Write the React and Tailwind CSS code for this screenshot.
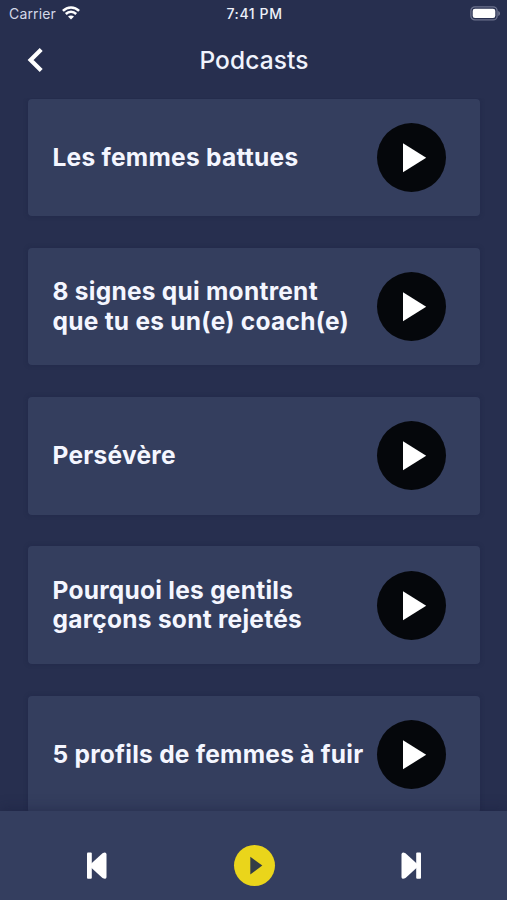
const podcasts = [
  { id: 1, title: 'Les femmes battues' },
  { id: 2, title: '8 signes qui montrent que tu es un(e) coach(e)' },
  { id: 3, title: 'Persévère' },
  { id: 4, title: 'Pourquoi les gentils garçons sont rejetés' },
  { id: 5, title: '5 profils de femmes à fuir' },
]

function StatusBar() {
  return (
    <div className="grid h-7 shrink-0 grid-cols-3 items-center pl-[9px] pr-[6px] text-[14px]">
      <div className="flex items-center gap-[6px] pb-px text-[#d3d8e8]">
        <span className="tracking-[0.15px]">Carrier</span>
        <svg className="mb-px h-[14px] w-[18px]" viewBox="0 0 18 14" fill="none" stroke="#fff" strokeWidth="2.5">
          <path d="M0.9 4.9C5.5 0.3 12.5 0.3 17.1 4.9" />
          <path d="M3.8 8C6.8 5.1 11.2 5.1 14.2 8" />
          <path d="M9 13.6L6 10.6C7.7 9 10.3 9 12 10.6Z" fill="#fff" stroke="none" />
        </svg>
      </div>
      <span className="pb-px pr-px text-center text-[14px] font-medium tracking-[0.6px] text-[#eef1fa]">7:41 PM</span>
      <svg className="mb-[2px] h-[15px] w-[31px] justify-self-end" viewBox="0 0 31 15">
        <rect x="0.9" y="0.9" width="26.2" height="13" rx="4" fill="none" stroke="#6d738e" strokeWidth="1.3" />
        <rect x="2.7" y="2.7" width="22.6" height="9.4" rx="2.3" fill="#fff" />
        <path d="M28.3 5v5c2.1-.8 2.1-4.2 0-5z" fill="#7d839b" />
      </svg>
    </div>
  )
}

function Header() {
  return (
    <header className="grid h-[70px] shrink-0 grid-cols-[1fr_auto_1fr] items-center px-[27px] pb-[7px]">
      <button aria-label="Retour" className="w-4">
        <svg className="h-[26px] w-4" viewBox="0 0 16 26" fill="none" stroke="#fff" strokeWidth="4.2">
          <path d="M14.2 2.4L3.6 13L14.2 23.4" />
        </svg>
      </button>
      <h1 className="pl-px pt-px text-[24.5px] font-medium tracking-[0.1px] text-[#f0f3fd]">Podcasts</h1>
    </header>
  )
}

function PodcastCard({ title }) {
  return (
    <li className="flex h-[117.5px] shrink-0 items-center rounded-[4px] bg-[#343e5e] pl-[25px] pr-[34px] shadow-[0_0_5px_rgba(20,26,58,0.25)]">
      <h2 className="w-[324px] shrink-0 pr-[11px] text-[24.5px] font-bold leading-[29.5px] tracking-[0.26px] text-[#f4f6ff]">
        {title}
      </h2>
      <button aria-label="Lire" className="size-[69px] shrink-0 rounded-full bg-[#05070b]">
        <svg className="size-full" viewBox="0 0 69 69" fill="#fff">
          <path d="M26 20.3V49.3L49.2 34.8Z" />
        </svg>
      </button>
    </li>
  )
}

function Player() {
  return (
    <footer className="z-10 flex h-[89px] shrink-0 items-center justify-between bg-[#343e5f] pl-[86px] pr-[85px] pt-[20px] shadow-[0_-2px_12px_rgba(22,28,60,0.4)]">
      <button aria-label="Précédent">
        <svg className="h-[27px] w-[21px]" viewBox="0 0 21 27" fill="#fff">
          <rect x="1" y="0.5" width="4.8" height="26.2" rx="1" />
          <path d="M5 11.7L16.5 1.2Q20 -0.7 20.5 2V25.2Q20 28 16.5 26L5 15.500Z" />
        </svg>
      </button>
      <button aria-label="Lecture" className="size-[41px] rounded-full bg-[#ead51b]">
        <svg className="size-full" viewBox="0 0 41 41" fill="#343e46">
          <path d="M16.3 11.8V29.5L28.3 20.6Z" />
        </svg>
      </button>
      <button aria-label="Suivant">
        <svg className="h-[27px] w-[21px]" viewBox="0 0 21 27" fill="#fff">
          <rect x="15.2" y="0.5" width="4.8" height="26.2" rx="1" />
          <path d="M16 11.7L4.5 1.2Q1 -0.7 0.5 2V25.2Q1 28 4.5 26L16 15.500Z" />
        </svg>
      </button>
    </footer>
  )
}

export default function App() {
  return (
    <div className="flex h-screen flex-col overflow-hidden bg-[#272f4f] font-['Inter',sans-serif]">
      <StatusBar />
      <Header />
      <main className="min-h-0 flex-1 overflow-hidden px-[27.5px] pt-[0.5px]">
        <ul className="flex flex-col gap-[31.75px]">
          {podcasts.map((podcast) => (
            <PodcastCard key={podcast.id} title={podcast.title} />
          ))}
        </ul>
      </main>
      <Player />
    </div>
  )
}
